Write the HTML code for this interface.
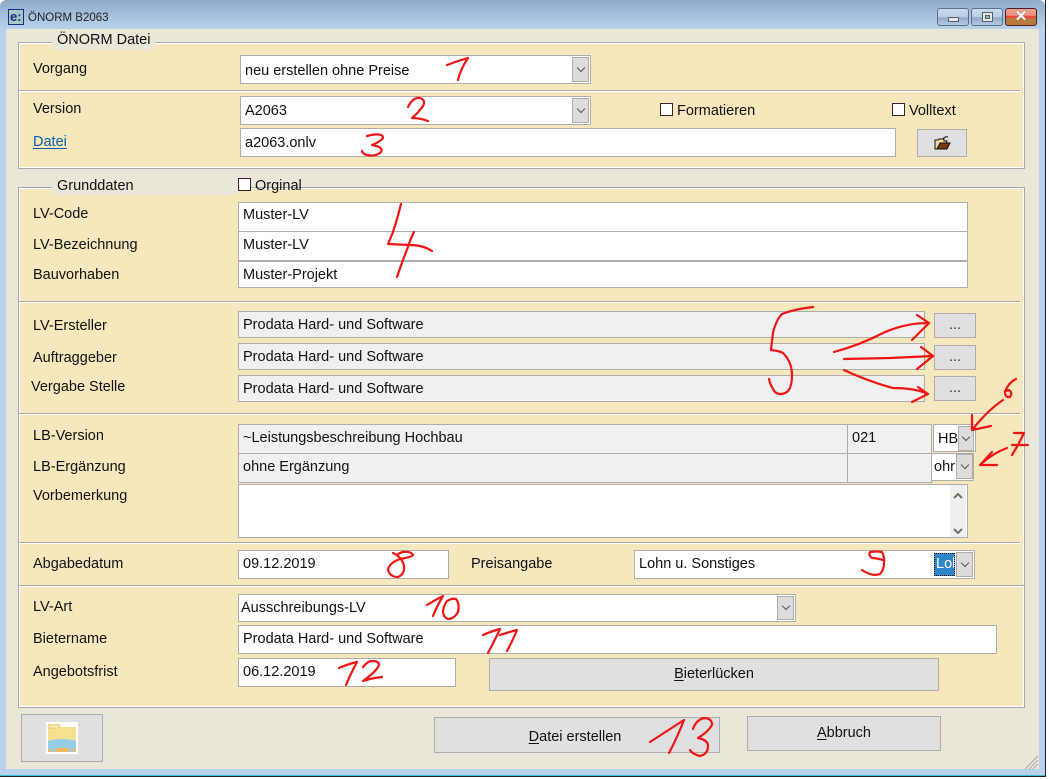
<!DOCTYPE html>
<html><head><meta charset="utf-8"><style>
html,body{margin:0;padding:0}
body{width:1049px;height:779px;position:relative;overflow:hidden;background:#fff;font-family:"Liberation Sans",sans-serif;font-size:14.5px;color:#111}
#t{position:absolute;left:0;top:0;width:1045px;height:776px;background:linear-gradient(#8fabcb 0,#b9d2ec 29px,#b9d2ec 100%);border-radius:6px 6px 0 0}
#c{position:absolute;left:6px;top:29px;width:1033px;height:740px;background:#ebe7d8}
.a{position:absolute;box-sizing:border-box}
.p{background:#f6e7bc;border:1px solid #a9a9a9;outline:1px solid #fff;outline-offset:-2px}
.l{height:2px;background:#a9a9a9;border-bottom:1px solid #fff}
.f{background:#fff;border:1px solid #adadad;padding-left:4px;white-space:nowrap;overflow:hidden}
.g{background:#f0f0f0}
.b{background:#e0e0e0;border:1px solid #adadad;text-align:center}
.x{position:absolute;white-space:nowrap;line-height:18px}
.dd{position:absolute;background:#dcdcdc;border:1px solid #adadad;box-sizing:border-box}
.dd:after{content:"";position:absolute;left:50%;top:50%;width:5px;height:5px;margin:-5px 0 0 -3px;border-right:1px solid #555;border-bottom:1px solid #555;transform:rotate(45deg)}
.ck{position:absolute;width:13px;height:13px;box-sizing:border-box;background:#fff;border:1px solid #3a2030}
u{text-underline-offset:2px}
svg{position:absolute;left:0;top:0;pointer-events:none}
</style></head><body>
<div id="t"></div>
<div class="a" style="left:8px;top:9px;width:16px;height:16px;background:#a8c8c8;border:1px solid #1a2a80;color:#1a2a80;font:bold 13px/13px 'Liberation Sans',sans-serif;padding-left:1px">e:</div>
<div class="x" style="left:28px;top:9px;font-size:11.5px;color:#222">ÖNORM B2063</div>
<div class="a" style="left:937px;top:8px;width:32px;height:18px;border:1px solid #5b7188;border-radius:3px;background:linear-gradient(#c9dcf0 0,#b6cde6 50%,#8ea9c6 55%,#b4cbe4 100%)"><div class="a" style="left:10px;top:8px;width:11px;height:5px;background:#e8e8df;border:1px solid #55606a"></div></div>
<div class="a" style="left:971px;top:8px;width:32px;height:18px;border:1px solid #5b7188;border-radius:3px;background:linear-gradient(#c9dcf0 0,#b6cde6 50%,#8ea9c6 55%,#b4cbe4 100%)"><div class="a" style="left:10px;top:3px;width:11px;height:10px;background:#e8e8df;border:1px solid #55606a"><div class="a" style="left:2px;top:2px;width:5px;height:4px;border:1px solid #55606a;background:#9db4cc"></div></div></div>
<div class="a" style="left:1005px;top:8px;width:32px;height:18px;border:1px solid #4a2030;border-radius:3px;background:linear-gradient(#f0a090 0,#ee8f82 40%,#ea4a3a 45%,#ea4a3a 55%,#b97a3e 60%,#b97a3e 100%);color:#fff;font:bold 15px/16px 'Liberation Sans',sans-serif;text-align:center;text-shadow:0 0 1px #444">✕</div>
<div id="c"></div>

<div class="a p" style="left:18px;top:42px;width:1007px;height:127px"></div>
<div class="a l" style="left:19px;top:90px;width:1001px"></div>
<div class="x" style="left:52px;top:31px;padding:0 5px 1px;background:#ebe7d8;height:18px">ÖNORM Datei</div>
<div class="x" style="left:33px;top:60px">Vorgang</div>
<div class="x" style="left:33px;top:100px">Version</div>
<div class="x" style="left:33px;top:133px;color:#0b5cad"><u>Datei</u></div>
<div class="a f" style="left:240px;top:55px;width:351px;height:29px;line-height:30px">neu erstellen ohne Preise</div><div class="dd" style="left:572px;top:57px;width:17px;height:25px"></div>
<div class="a f" style="left:240px;top:96px;width:351px;height:29px;line-height:28px">A2063</div><div class="dd" style="left:572px;top:98px;width:17px;height:25px"></div>
<div class="ck" style="left:660px;top:103px"></div><div class="x" style="left:677px;top:102px">Formatieren</div>
<div class="ck" style="left:892px;top:103px"></div><div class="x" style="left:909px;top:102px">Volltext</div>
<div class="a f" style="left:240px;top:128px;width:656px;height:29px;line-height:29px">a2063.onlv</div>
<div class="a b" style="left:917px;top:129px;width:50px;height:28px"></div>
<svg style="left:934px;top:135px" width="17" height="15"><path d="M1 5h3l1-1h5v2h3l-3 8H1z" fill="#f3d9a0" stroke="#111"/><path d="M3 14l3-6h10l-3 6z" fill="#7a3a10" stroke="#111"/><path d="M9 4q2-3 5-2" fill="none" stroke="#111"/></svg>

<div class="a p" style="left:18px;top:187px;width:1007px;height:521px"></div>
<div class="x" style="left:52px;top:177px;width:186px;padding:0 5px;box-sizing:border-box;background:#ebe7d8;height:18px">Grunddaten</div>
<div class="ck" style="left:238px;top:178px"></div><div class="x" style="left:255px;top:177px">Orginal</div>
<div class="x" style="left:33px;top:205px">LV-Code</div>
<div class="x" style="left:33px;top:236px">LV-Bezeichnung</div>
<div class="x" style="left:33px;top:266px">Bauvorhaben</div>
<div class="a f" style="left:238px;top:202px;width:730px;height:30px;line-height:24px">Muster-LV</div>
<div class="a f" style="left:238px;top:231px;width:730px;height:30px;line-height:27px">Muster-LV</div>
<div class="a f" style="left:238px;top:261px;width:730px;height:27px;line-height:26px">Muster-Projekt</div>
<div class="a l" style="left:19px;top:301px;width:1001px"></div>

<div class="x" style="left:33px;top:317px">LV-Ersteller</div>
<div class="x" style="left:33px;top:349px">Auftraggeber</div>
<div class="x" style="left:31px;top:378px">Vergabe Stelle</div>
<div class="a f g" style="left:238px;top:311px;width:687px;height:27px;line-height:26px">Prodata Hard- und Software</div>
<div class="a f g" style="left:238px;top:343px;width:687px;height:27px;line-height:26px">Prodata Hard- und Software</div>
<div class="a f g" style="left:238px;top:375px;width:687px;height:27px;line-height:26px">Prodata Hard- und Software</div>
<div class="a b" style="left:934px;top:313px;width:42px;height:25px;line-height:22px;color:#333">...</div>
<div class="a b" style="left:934px;top:345px;width:42px;height:25px;line-height:22px;color:#333">...</div>
<div class="a b" style="left:934px;top:376px;width:42px;height:25px;line-height:22px;color:#333">...</div>
<div class="a l" style="left:19px;top:413px;width:1001px"></div>

<div class="x" style="left:33px;top:427px">LB-Version</div>
<div class="x" style="left:33px;top:458px">LB-Ergänzung</div>
<div class="x" style="left:33px;top:487px">Vorbemerkung</div>
<div class="a f g" style="left:238px;top:424px;width:610px;height:30px;line-height:27px">~Leistungsbeschreibung Hochbau</div>
<div class="a f g" style="left:847px;top:424px;width:85px;height:30px;line-height:27px">021</div>
<div class="a f" style="left:933px;top:424px;width:43px;height:28px;line-height:28px">HB</div><div class="dd" style="left:958px;top:426px;width:16px;height:25px"></div>
<div class="a f g" style="left:238px;top:453px;width:610px;height:30px;line-height:27px">ohne Ergänzung</div>
<div class="a f g" style="left:847px;top:453px;width:85px;height:30px"></div>
<div class="a f" style="left:932px;top:453px;width:42px;height:28px;line-height:27px;border-left:0;padding-left:2px">ohr</div><div class="dd" style="left:956px;top:454px;width:17px;height:25px"></div>
<div class="a f" style="left:238px;top:484px;width:730px;height:54px"></div>
<div class="a" style="left:950px;top:485px;width:16px;height:52px;background:#efefef"></div>
<svg style="left:950px;top:485px" width="16" height="52" fill="none" stroke="#707060" stroke-width="2"><path d="M4 13l4-4 4 4M4 44l4 4 4-4"/></svg>
<div class="a l" style="left:19px;top:542px;width:1001px"></div>

<div class="x" style="left:33px;top:555px">Abgabedatum</div>
<div class="a f" style="left:238px;top:550px;width:211px;height:29px;line-height:27px">09.12.2019</div>
<div class="x" style="left:471px;top:555px">Preisangabe</div>
<div class="a f" style="left:634px;top:550px;width:341px;height:29px;line-height:27px">Lohn u. Sonstiges</div>
<div class="a" style="left:934px;top:553px;width:21px;height:23px;background:#2f86c6;outline:1px dotted #111;outline-offset:-1px;color:#fff;line-height:23px;padding-left:2px;overflow:hidden">Loh</div>
<div class="dd" style="left:956px;top:552px;width:17px;height:25px"></div>
<div class="a l" style="left:19px;top:585px;width:1005px"></div>

<div class="x" style="left:33px;top:598px">LV-Art</div>
<div class="x" style="left:33px;top:630px">Bietername</div>
<div class="x" style="left:33px;top:663px">Angebotsfrist</div>
<div class="a f" style="left:238px;top:594px;width:558px;height:28px;line-height:26px;padding-left:2px">Ausschreibungs-LV</div><div class="dd" style="left:777px;top:596px;width:17px;height:24px"></div>
<div class="a f" style="left:238px;top:625px;width:759px;height:29px;line-height:27px">Prodata Hard- und Software</div>
<div class="a f" style="left:238px;top:658px;width:218px;height:29px;line-height:27px">06.12.2019</div>
<div class="a b" style="left:489px;top:658px;width:450px;height:33px;line-height:31px"><u>B</u>ieterlücken</div>

<div class="a b" style="left:21px;top:714px;width:82px;height:48px"></div>
<svg style="left:46px;top:722px" width="32" height="32"><rect width="32" height="32" fill="#fff"/><path d="M2 2h11l2 3h15v24H2z" fill="#f6e08e"/><path d="M2 3h11v3H2z" fill="#f9eeb8" stroke="#e8a850" stroke-width=".5"/><path d="M2 19q14-4 28 0v11H2z" fill="#97cbe6"/><path d="M9 26h14v4H9z" fill="#f0b860"/><path d="M2 27h3v3H2zM27 27h3v3h-3z" fill="#f0b860"/></svg>
<div class="a b" style="left:434px;top:717px;width:286px;height:36px;line-height:38px;padding-right:4px"><u>D</u>atei erstellen</div>
<div class="a b" style="left:747px;top:716px;width:194px;height:35px;line-height:33px"><u>A</u>bbruch</div>
<svg style="left:1024px;top:755px" width="15" height="14"><path d="M14 1L1 14M14 5L5 14M14 9L9 14" stroke="#a9a9a9" fill="none"/></svg>
<div class="a" style="left:0;top:775px;width:1046px;height:1px;background:#35c0d8"></div>
<div class="a" style="left:0;top:776px;width:1046px;height:1px;background:#222"></div>
<div class="a" style="left:1045px;top:0;width:1px;height:777px;background:#222"></div>

<svg width="1049" height="779" fill="none" stroke="#f01414" stroke-width="2.2" stroke-linecap="round" stroke-linejoin="round">
<path d="M447 65Q457 61 468 58Q461 68 458 80"/>
<path d="M408 107Q413 97 420 98Q426 100 423 106Q418 113 412 118Q420 118 428 121"/>
<path d="M367 136Q383 132 383 138Q380 142 372 145Q384 147 381 152Q376 157 367 155Q363 154 362 151"/>
<path d="M401 204Q397 220 393 232L388 244L410 245Q423 245 432 251"/>
<path d="M414 232Q410 240 408 247Q402 262 397 277"/>
<path d="M813 307Q795 309 782 314Q776 320 773 333L771 350Q780 351 783 353Q792 362 792 375Q792 388 787 392Q780 396 775 392Q770 385 769 379"/>
<path d="M834 352Q860 345 883 333Q905 323 928 323"/><polyline points="917,315 929,323 912,340"/>
<polyline points="844,359 890,358 933,356"/><polyline points="921,347 933,356 917,369"/>
<path d="M844 370Q870 382 893 388Q915 388 928 394"/><polyline points="918,387 928,394 912,402"/>
<path d="M1016 379Q1008 383 1005 392Q1005 398 1010 397Q1013 393 1009 390L1005 391"/>
<path d="M1003 400Q988 410 972 430"/><polyline points="972,415 972,430 991,426"/>
<polyline points="1014,433 1024,433 1018,445 1012,455"/><line x1="1012" y1="445" x2="1028" y2="445"/>
<path d="M1007 448Q993 453 980 465"/><polyline points="992,452 980,465 997,465"/>
<path d="M393 553Q402 557 404 566Q405 574 398 577Q390 577 388 570Q389 563 400 559Q412 557 413 555Q411 551 403 552Q399 553 397 555"/>
<path d="M883 560Q876 558 872 558Q868 555 870 552Q876 551 882 552Q885 558 884 563Q884 570 880 574Q872 577 862 570"/>
<path d="M427 605Q435 600 443 596Q437 606 433 616"/><path d="M447 601Q452 598 456 599Q460 604 458 612Q454 619 448 619Q443 617 443 611Q444 605 447 601"/>
<path d="M483 635Q492 631 500 629Q494 642 488 653"/><path d="M500 635Q509 632 517 630Q512 642 507 651"/>
<path d="M339 668Q348 664 357 662Q350 675 346 685"/><path d="M363 667Q368 661 372 661Q379 661 379 665Q377 671 363 681Q372 678 382 677"/>
<path d="M650 742Q667 731 684 720Q677 738 669 753"/><path d="M693 729Q696 720 704 718Q712 718 712 725Q708 732 698 738Q708 740 708 746Q708 754 700 756Q692 754 690 750"/>
</svg>
</body></html>
